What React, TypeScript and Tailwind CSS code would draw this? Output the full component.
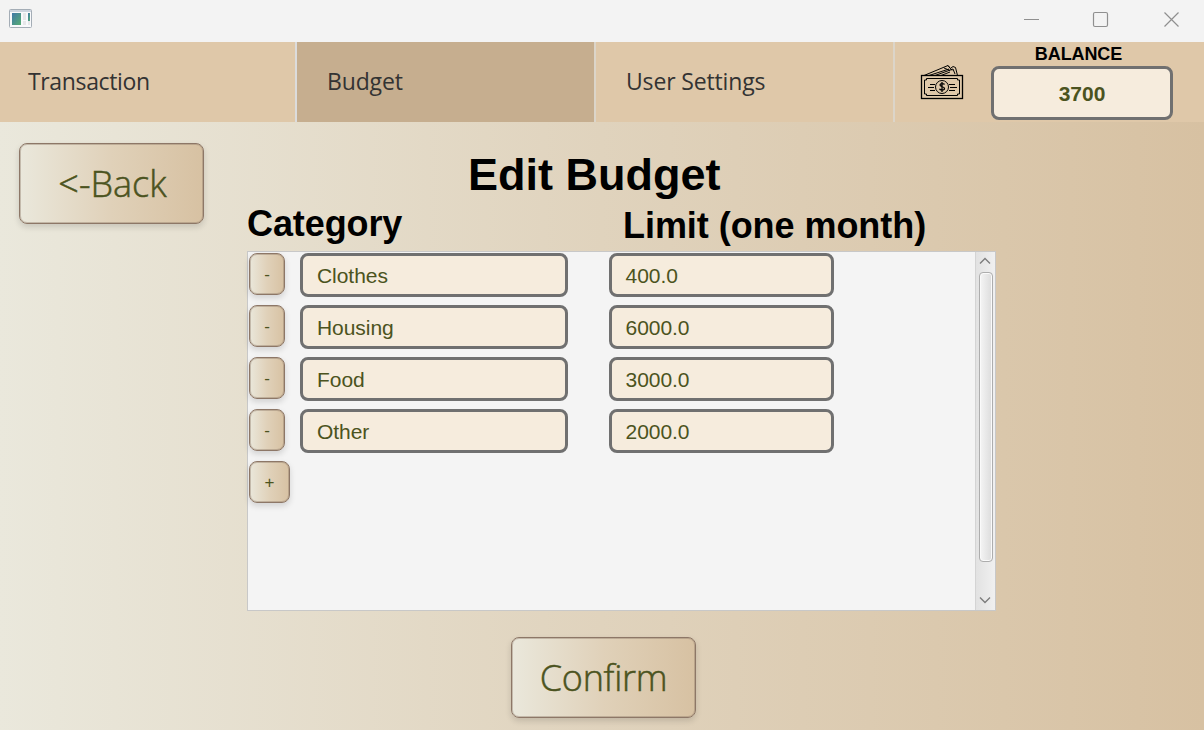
import React from "react";

const rows = [
  { name: "Clothes", limit: "400.0" },
  { name: "Housing", limit: "6000.0" },
  { name: "Food", limit: "3000.0" },
  { name: "Other", limit: "2000.0" },
];

const buttonBase =
  "flex items-center justify-center border-[1.5px] border-[#8d7767] outline-1 -outline-offset-2 outline-[#8d7767]/40 bg-gradient-to-r from-[#eae8dc] via-[#e0d1b9] to-[#d7c1a2] bg-origin-border text-[#4b5320] shadow-[0_3px_6px_rgba(0,0,0,0.14)]";

const largeLabel =
  "font-['Open_Sans','Noto_Sans',sans-serif] text-[36px] font-light [-webkit-text-stroke:0.5px_#4b5320]";

const fieldBase =
  "flex h-11 items-center rounded-lg border-3 border-[#707070] bg-[#f6ecdd] pt-[2px] text-[21px] leading-6 tracking-[-0.05px] text-[#4b5320]";

function AppIcon() {
  return (
    <svg width="24" height="20" viewBox="0 0 24 20">
      <defs>
        <linearGradient id="pane" x1="0" y1="0" x2="1" y2="1">
          <stop offset="0" stopColor="#3f78a8" />
          <stop offset="1" stopColor="#56ad72" />
        </linearGradient>
      </defs>
      <rect x="0.5" y="0.5" width="22" height="18" rx="1" fill="#f8f9fb" stroke="#a4adb6" />
      <path d="M1 2h21" stroke="#ccd4de" strokeWidth="2" />
      <rect x="3" y="4" width="9" height="12" fill="url(#pane)" />
      <path d="M14 4h3v7h-3zM14 12h3v4h-3zM19 12h2v4h-2z" fill="#e6e7e9" />
      <rect x="19" y="4" width="2" height="8" fill="url(#pane)" />
    </svg>
  );
}

function MoneyIcon() {
  return (
    <svg width="44" height="36" viewBox="0 0 44 36" fill="none" stroke="#000" strokeWidth="1">
      <rect x="1.500" y="10.500" width="41" height="23" strokeWidth="1.300" />
      <path d="M6.500 13.500h31v1.500h2v14h-2v1.500h-31V29h-2V15h2z" />
      <circle cx="22" cy="22" r="6.500" />
      <path d="M24.500 19.500c-.5-1.200-4.500-1.500-4.500.5s4.500 1.500 4.500 3.500-4.500 2-5 .3M22 17v10" strokeWidth="1.300" />
      <path d="M10 19.500h5M8 22.500h6M10 25.500h5M29 19.500h6M30 22.500h7M29 25.500h6" />
      <path d="M4 10.500L28 .5l2 2.500M9 10.500l20-6.500M15 10.500L33 4M21 10.500l9-3.500M28 .5l4 5M31 3l2-1.500 2.500 1 2 8M33 4l2 5M24 3l6 2.500" />
    </svg>
  );
}

function Chevron({ down }: { down?: boolean }) {
  return (
    <svg width="12" height="8" viewBox="0 0 12 8" fill="none" stroke="#7d7d7d" strokeWidth="1.4">
      <path d={down ? "M1 1.500l5 5 5-5" : "M1 6.500l5-5 5 5"} />
    </svg>
  );
}

export default function App() {
  return (
    <div className="flex h-[730px] w-[1204px] flex-col overflow-hidden bg-[#f3f3f3] font-['Liberation_Sans',sans-serif]">
      <header className="flex h-[42px] shrink-0 items-start justify-between pl-[9px]">
        <div className="pt-[9px]">
          <AppIcon />
        </div>
        <svg width="180" height="42" viewBox="0 0 180 42" fill="none" stroke="#8f8f8f" strokeWidth="1.200">
          <path d="M0 19.500h15M140.500 12.500l14 14M154.500 12.500l-14 14" />
          <rect x="69.500" y="12.500" width="14" height="14" rx="1.500" />
        </svg>
      </header>

      <nav className="flex h-20 shrink-0 bg-[#dfc8a9] font-['Open_Sans','Noto_Sans',sans-serif] text-[23px] leading-8 text-[#333333]">
        <div className="flex w-[297px] items-center border-r-2 border-[#dcdcdc] pb-[2px] pl-7">
          <span className="tracking-[-0.35px]">Transaction</span>
        </div>
        <div className="flex w-[299px] items-center border-r-2 border-[#dcd5c9] bg-[#c6ae8f] pb-[2px] pl-[30px]">
          <span className="tracking-[-0.15px]">Budget</span>
        </div>
        <div className="flex w-[299px] items-center border-r-2 border-[#dcd5c9] pb-[2px] pl-[30px]">
          <span className="tracking-[-0.15px]">User Settings</span>
        </div>
        <div className="flex flex-1 items-start pl-[25px] font-['Liberation_Sans',sans-serif] font-bold">
          <div className="pt-[23px]">
            <MoneyIcon />
          </div>
          <div className="ml-[27px] flex w-[182px] flex-col pt-[3px]">
            <div className="h-[21px] pr-[7px] text-center text-[18px] leading-[18px] tracking-[-0.1px] text-black">BALANCE</div>
            <div className="flex h-[54px] items-center justify-center rounded-lg border-3 border-[#707070] bg-[#f6ecdd] pt-[2px] text-[21px] leading-6 text-[#4b5320]">
              3700
            </div>
          </div>
        </div>
      </nav>

      <main className="flex flex-1 items-start bg-gradient-to-r from-[#eae8dc] via-[#e0d3bd] to-[#d7c1a2] pl-[19px]">
        <button className={`${buttonBase} ${largeLabel} mt-[21px] h-[81px] w-[185px] rounded-lg pl-[2px]`}>
          &lt;-Back
        </button>

        <section className="ml-[43px] flex w-[749px] flex-col">
          <h1 className="mt-7 pl-[221px] text-[45px] leading-[50px] font-bold text-black">Edit Budget</h1>
          <div className="flex h-[51px] text-[36px] leading-10 font-bold text-black">
            <h2 className="w-[376px] pt-1 tracking-[-0.1px]">Category</h2>
            <h2 className="pt-[6px] tracking-[-0.05px]">Limit (one month)</h2>
          </div>

          <div className="flex h-[360px] border border-[#c8c8c8] bg-[#f4f4f4]">
            <div className="flex flex-1 flex-col gap-2 pt-px pl-px">
              {rows.map((row) => (
                <div key={row.name} className="flex h-11 items-start">
                  <button className={`${buttonBase} h-[42px] w-9 rounded-lg pt-[2px] text-[17px]`}>-</button>
                  <div className={`${fieldBase} ml-[15px] w-[268px] pl-3.5`}>{row.name}</div>
                  <div className={`${fieldBase} ml-[41px] w-[225px] pl-[13.500px]`}>{row.limit}</div>
                </div>
              ))}
              <button className={`${buttonBase} h-[42px] w-[41px] rounded-lg pt-[2px] text-[17px]`}>+</button>
            </div>
            <div className="flex w-5 flex-col items-center border-l border-[#d4d4d4] bg-gradient-to-r from-[#e2e2e2] to-[#f0f0f0]">
              <div className="flex h-5 items-center pr-px pb-[2px]">
                <Chevron />
              </div>
              <div className="h-[290px] w-[14px] shrink-0 rounded-[4px] border border-[#adadad] bg-gradient-to-r from-[#f5f5f5] to-[#dcdcdc] shadow-[inset_0_0_0_1px_#fafafa]" />
              <div className="flex flex-1 items-end pr-px pb-[6px]">
                <Chevron down />
              </div>
            </div>
          </div>

          <button className={`${buttonBase} ${largeLabel} mt-[26px] ml-[264px] h-[81px] w-[185px] rounded-lg tracking-[-0.3px]`}>
            Confirm
          </button>
        </section>
      </main>
    </div>
  );
}
